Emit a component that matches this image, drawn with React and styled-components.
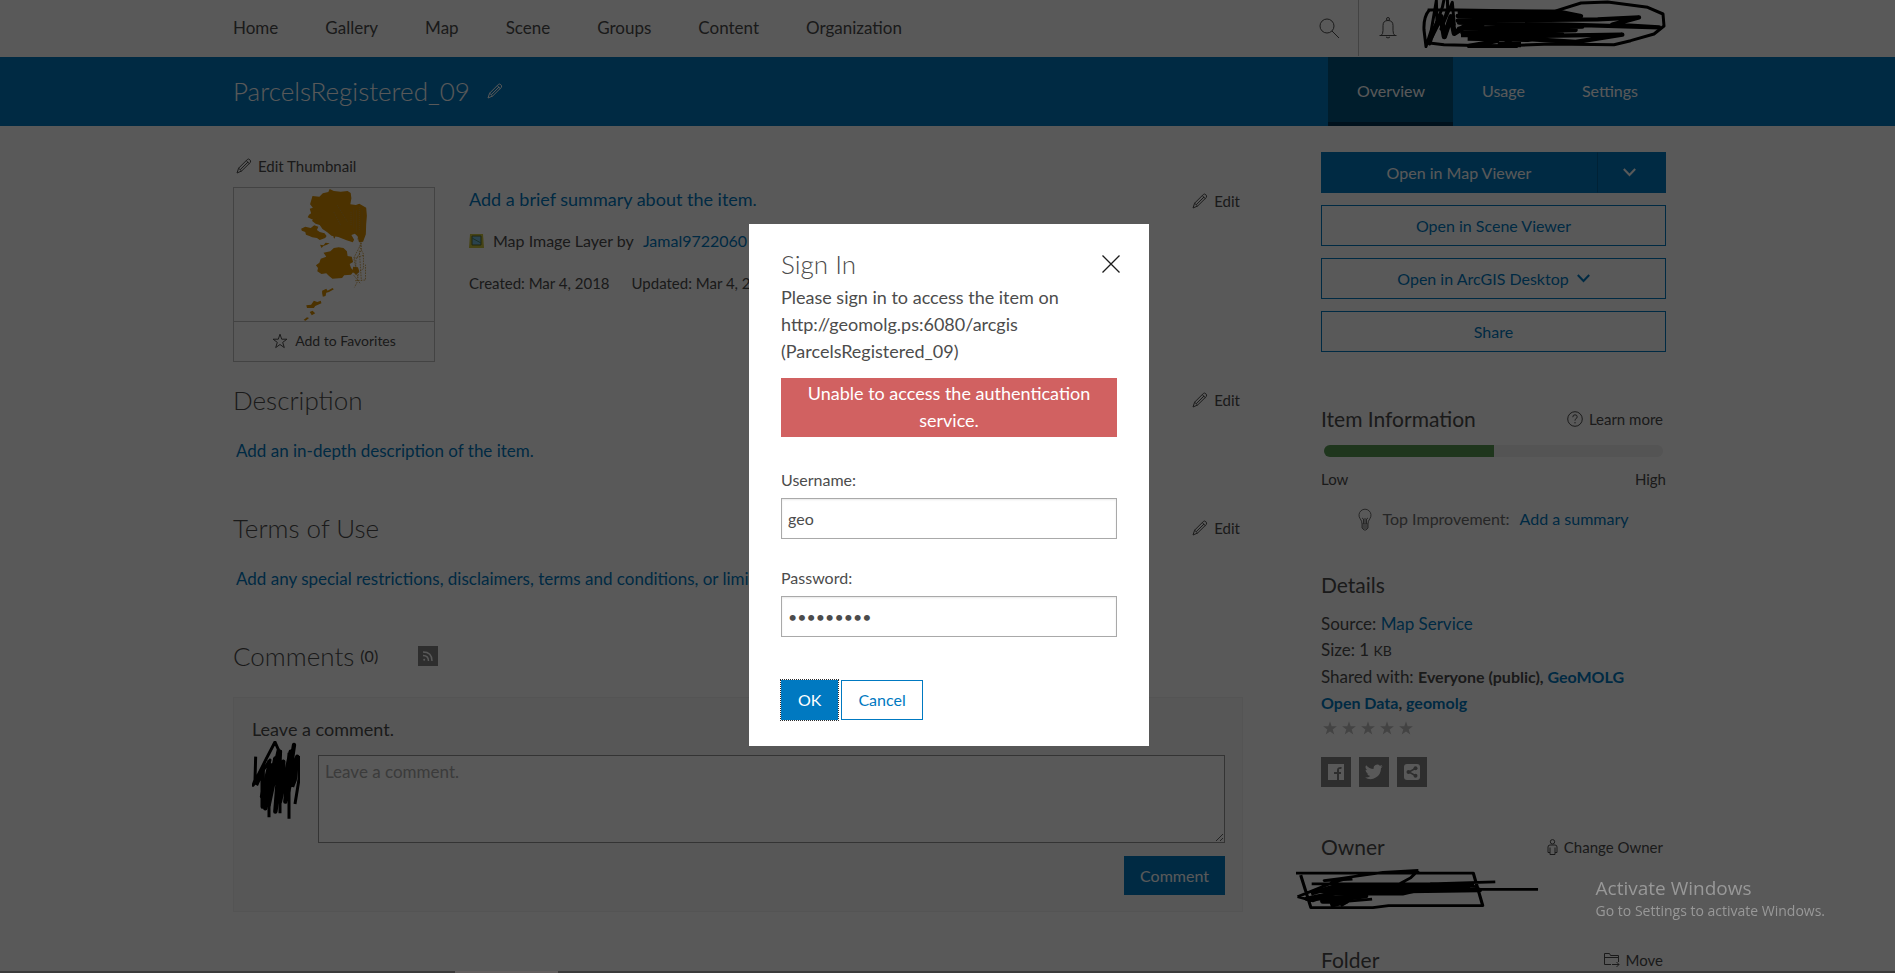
import React from 'react';
import styled, { createGlobalStyle } from 'styled-components';

const colors = {
	text: '#4c4c4c',
	muted: '#6e6e6e',
	blue: '#0079c1',
	line: '#c0c0c0',
	white: '#ffffff',
	error: '#d16161',
	green: '#5a9a55',
};

const GlobalStyle = createGlobalStyle`
	* {
		box-sizing: border-box;
	}

	body {
		margin: 0;
		overflow: hidden;
		font-family: Lato, "Open Sans", sans-serif;
		font-size: 16px;
		line-height: 24px;
		color: ${colors.text};
		background-color: ${colors.white};
	}

	button, input, textarea {
		font: inherit;
	}

	h1, h2, h3, p {
		margin: 0;
		font-weight: 400;
	}

	h1, h2 {
		font-size: 26px;
		font-weight: 300;
	}

	a {
		color: ${colors.blue};
		text-decoration: none;
	}

	svg {
		display: block;
		flex: none;
	}
`;

const Container = styled.div`
	display: flex;
	max-width: 1437px;
	margin: 0 auto;
	padding-left: 4px;
`;

const TopBar = styled(Container)`
	height: 57px;
	justify-content: space-between;
`;

const Nav = styled.nav`
	display: flex;
	align-items: center;
	gap: 47px;
	padding-bottom: 2px;
	font-size: 17px;

	a {
		color: ${colors.text};
	}
`;

const Account = styled.div`
	display: flex;
	align-items: flex-start;
`;

const User = styled.div`
	padding-left: 4px;
`;

const IconButton = styled.button`
	display: flex;
	align-items: center;
	height: ${props => props.$height || 24}px;
	padding: 0 ${props => props.$pad || 0}px;
	border: 0;
	border-right: ${props => (props.$divider ? `1px solid ${colors.line}` : '0')};
	color: inherit;
	background: none;
`;

const Band = styled.div`
	color: ${colors.white};
	background-color: ${colors.blue};
`;

const BandRow = styled(Container)`
	height: 69px;
	justify-content: space-between;
`;

const Title = styled.div`
	display: flex;
	align-items: center;
	gap: 17px;
	padding-bottom: 2px;
`;

const Tabs = styled.nav`
	display: flex;
`;

const Tab = styled.a`
	display: flex;
	align-items: center;
	padding: 2px 28px 0 29px;
	color: ${colors.white};
	background-color: ${props => (props.$active ? '#00537f' : 'transparent')};
	border-bottom: 4px solid ${props => (props.$active ? '#003350' : 'transparent')};
`;

const Page = styled(Container)`
	gap: 78px;
`;

const Main = styled.main`
	flex: 1;
	min-width: 0;
	padding-top: 31px;
`;

const Aside = styled.aside`
	width: 345px;
	padding-top: 26px;
`;

const Action = styled.button`
	display: flex;
	align-items: center;
	gap: 6px;
	padding: 0 3px;
	border: 0;
	font-size: 15px;
	line-height: 18px;
	color: ${colors.text};
	background: none;
`;

const Hero = styled.div`
	display: flex;
	align-items: flex-start;
	gap: 34px;
	padding-top: 12px;
`;

const Thumbnail = styled.div`
	width: 202px;
	border: 1px solid ${colors.line};
`;

const Favorite = styled.button`
	display: flex;
	align-items: center;
	justify-content: center;
	gap: 7px;
	width: 100%;
	height: 40px;
	padding: 0 0 2px;
	border: 0;
	border-top: 1px solid ${colors.line};
	font-size: 14px;
	color: ${colors.text};
	background: none;
`;

const Info = styled.div`
	display: flex;
	flex: 1;
	flex-direction: column;
	gap: 18px;
`;

const Summary = styled.a`
	font-size: 18px;
`;

const Source = styled.div`
	display: flex;
	align-items: center;
	gap: 9px;
`;

const Dates = styled.div`
	display: flex;
	gap: 22px;
	font-size: 15px;
`;

const HeroEdit = styled.div`
	padding-top: 5px;
`;

const Section = styled.section`
	padding: ${props => (props.$first ? 22 : 48)}px 0 0;
`;

const SectionHead = styled.div`
	display: flex;
	align-items: center;
	justify-content: space-between;
	height: 32px;
	margin-bottom: 23px;
`;

const SectionLink = styled.a`
	display: block;
	margin-bottom: 1px;
	padding-left: 3px;
	font-size: 17px;
	white-space: nowrap;
`;

const CommentHead = styled.div`
	display: flex;
	align-items: center;
	height: 32px;
	margin-bottom: 25px;

	span {
		margin: 0 40px 0 6px;
	}
`;

const Feed = styled.a`
	display: flex;
	align-items: center;
	justify-content: center;
	width: 20px;
	height: 20px;
	background-color: #858585;
`;

const CommentPanel = styled.form`
	padding: 19px 17px 16px 18px;
	border: 1px solid #f0f0f0;
	background-color: #fafafa;

	label {
		display: block;
		margin-bottom: 14px;
		font-size: 18px;
	}
`;

const CommentRow = styled.div`
	display: flex;
	gap: 18px;

	svg {
		margin-top: -14px;
		margin-bottom: -4px;
	}
`;

const CommentBox = styled.textarea`
	flex: 1;
	height: 88px;
	padding: 4px 6px;
	border: 1px solid #959595;
	font-size: 17px;
	background-color: ${colors.white};
	resize: vertical;

	&::placeholder {
		color: #a9a9a9;
	}
`;

const CommentFoot = styled.div`
	display: flex;
	justify-content: flex-end;
	padding-top: 13px;
`;

const Button = styled.button`
	display: flex;
	align-items: center;
	justify-content: center;
	gap: 8px;
	height: ${props => props.$height || 41}px;
	padding: 0 ${props => props.$pad || 15}px;
	border: 1px solid ${colors.blue};
	color: ${props => (props.$solid ? colors.white : colors.blue)};
	background-color: ${props => (props.$solid ? colors.blue : colors.white)};

	&:focus-visible {
		outline: 1px dotted #2d2d2d;
	}
`;

const Openers = styled.div`
	display: flex;
	flex-direction: column;
	gap: 12px;
`;

const Split = styled.div`
	display: grid;
	grid-template-columns: 1fr 69px;

	button + button {
		padding-right: 19px;
		border-left-color: #00619b;
	}
`;

const AsideHead = styled.div`
	display: flex;
	align-items: center;
	justify-content: space-between;
	height: 28px;
	margin-top: ${props => props.$top}px;

	h3 {
		font-size: 21px;
	}
`;

const Meter = styled.div`
	height: 12px;
	margin: 12px 3px;
	overflow: hidden;
	border-radius: 6px;
	background-color: #efefef;
`;

const MeterFill = styled.div`
	height: 100%;
	background-color: ${colors.green};
`;

const Scale = styled.div`
	display: flex;
	justify-content: space-between;
	font-size: 15px;
	line-height: 20px;
`;

const Improvement = styled.div`
	display: flex;
	align-items: center;
	justify-content: center;
	gap: 10px;
	margin-top: 18px;
	color: ${colors.muted};
`;

const Facts = styled.div`
	margin-top: 12px;
	font-size: 17px;
	line-height: 26px;

	b {
		font-size: 16px;
	}

	small {
		font-size: 14px;
	}
`;

const Stars = styled.div`
	display: flex;
	align-items: center;
	gap: 3px;
	height: 18px;
	padding-left: 1px;
	margin-top: 3px;
`;

const Socials = styled.div`
	display: flex;
	gap: 8px;
	margin-top: 20px;

	a {
		display: flex;
		align-items: center;
		justify-content: center;
		width: 30px;
		height: 30px;
		background-color: #858585;
	}
`;

const OwnerName = styled.div`
	margin: 8px 0 0 -25px;
`;

const Overlay = styled.div`
	position: fixed;
	inset: 0;
	display: flex;
	align-items: center;
	justify-content: center;
	padding: 0 0 3px 3px;
	background-color: rgba(0, 0, 0, 0.65);
`;

const Dialog = styled.form`
	width: 400px;
	padding: 24px 32px 26px;
	background-color: ${colors.white};
`;

const DialogHead = styled.div`
	display: flex;
	align-items: center;
	justify-content: space-between;
	height: 32px;
	margin: 0 -3px 4px 0;
`;

const Message = styled.p`
	font-size: 18px;
	line-height: 27px;
`;

const Alert = styled.p`
	margin: 13px 0 31px;
	padding: 2px 0 3px;
	font-size: 18px;
	line-height: 27px;
	text-align: center;
	color: ${colors.white};
	background-color: ${colors.error};
`;

const Field = styled.label`
	display: block;
	margin-bottom: 27px;

	input {
		display: block;
		width: 100%;
		height: 41px;
		margin-top: 6px;
		padding: 0 6px;
		border: 1px solid #a9a9a9;
		border-radius: 0;
		color: ${colors.text};
		background-color: ${colors.white};
		box-shadow: inset 0 1px 2px #e8e8e8;
	}
`;

const DialogFoot = styled.div`
	display: flex;
	gap: 3px;
	padding-top: 16px;
`;

const Watermark = styled.div`
	position: fixed;
	right: 70px;
	bottom: 52px;
	font-family: "Open Sans", sans-serif;
	font-size: 14px;
	line-height: 20px;
	color: #989898;

	p:first-child {
		font-size: 19px;
		line-height: 26px;
	}
`;

const Taskbar = styled.div`
	position: fixed;
	right: 0;
	bottom: 0;
	left: 0;
	height: 2px;
	padding-left: 24%;
	background-color: #3b3a3a;

	div {
		width: 103px;
		height: 2px;
		background-color: #625e5e;
	}
`;

function Pencil() {
	return (
		<svg width="16" height="16" viewBox="0 0 16 16" fill="none" stroke="currentColor">
			<path d="M1 15l1.600-4.800L11.400 1.400q1.200-.9 2.400.3t.7 2.600L5.600 13 1 15zM2.600 10.200L5.600 13M10.200 2.600l3.100 3M4.300 11.600L12 4" />
		</svg>
	);
}

function Chevron() {
	return (
		<svg width="13" height="9" viewBox="0 0 13 9" fill="none" stroke="currentColor" strokeWidth="2">
			<path d="M.8 1l5.700 6 5.700-6" />
		</svg>
	);
}

function Star({ filled }) {
	return (
		<svg
			width="16"
			height="16"
			viewBox="0 0 16 16"
			fill={filled ? '#c0c0c0' : 'none'}
			stroke={filled ? 'none' : 'currentColor'}
		>
			<path d="M8 1.200l1.700 5h5.200l-4.200 3.200 1.600 5.200L8 11.500l-4.300 3.100 1.600-5.200L1.100 6.200h5.200z" />
		</svg>
	);
}

function EditAction({ children = 'Edit' }) {
	return (
		<Action type="button">
			<Pencil />
			{children}
		</Action>
	);
}

function ParcelMap() {
	return (
		<svg width="200" height="133" viewBox="40 128 581 399" preserveAspectRatio="none" fill="#d98f00">
			<path d="M268 152l20 2 10-10 16-4 4-9 12 6 20 2 20-2 9 6 2 16-3 18 16 2 10-4 20 12 2 24-2 26-1 30-8 22-12 2-4-18-8-8-10 4 8 14-4 8-18-6-24-10-20-4-12-10-14-10-8-12-12-4-10-8 4-14-4-12 2-14-8-10z" />
			<path d="M260 190l14-4 6 10 12 6 2 14-14 4-14 2-12-6 4-8 6-4zM235 250l12-6 16 4 10-8 12 4-4 10 8 6 14 4 6 8-4 6-16 6-8-6-14-2-8-4-10-4-2-8-10-4zM328 264l8 4-4 12-3-4zM290 298l10 2 6-8 12 2-8 4-10 4-6 6zM300 322l20-4 10-10 14-2 14 2 10 10 2 14 12 2 4 16-10 6 4 12 8 10-8 10-20 2-6 8-28 2-10-8-8-8-14 2-12-8 2-10-6-8 10-8 4-12 16-6zM386 364l14 2 4 12-8 10-12-8zM296 436l12-6 4 6 14-8 4 4-14 8-8 2-2 10-8 2-2-10zM250 480l14-2 8-12 10 4 10-4 2 8-18 8-4 6-20 0zM260 500l8-4 8 8-10 6zM242 524l10-8 6 2-10 8z" />
			<path
				d="M398 280l10 10-2 16 10 20 0 44-14 10-4 30-8 16M410 284l0 30-16 30 0 46M416 330l-30 10M404 316l6 90M392 406l30-2 0-46M388 390l20 26M408 298l-20 40 12 60"
				fill="none"
				stroke="#c08a20"
				strokeWidth="2"
				strokeDasharray="5 3"
			/>
			<path
				d="M388 190v60M396 196v62M404 186v70M412 196v60M380 200v40M340 180l30 50M330 200l20 40"
				fill="none"
				stroke="#b8a070"
				strokeWidth="2"
				strokeDasharray="2 4"
			/>
		</svg>
	);
}

function AccountMark() {
	return (
		<svg width="245" height="48" viewBox="420 0 735 144" fill="none" stroke="#000" strokeWidth="9" strokeLinejoin="round">
			<path d="M445 30q-18 20-16 60l6 50 16-50 15-88 2 60-22 70 38-110 14-65 2 70-20 60 34-80 6 70" />
			<path d="M440 30h90l290 4 80-25 80-3 120 16 46 20 3 36-30 24-70 20-50 12-190-2-160 6-160-4-50-6" />
			<path strokeWidth="13" d="M530 36h310l60 12h-370l340 6-340 8 420-4 124-6-80 22 140 8-280-8-320-6 370 12-370 6 350 4-340 8 300 6-240 6 420-6-140 22-220-14 40 28-140-2 90-16" />
			<path strokeWidth="16" d="M450 110l30-60 10 60 20-60 10 50 30-20h60M540 104h260l-60 14-180-4M650 134h70" />
		</svg>
	);
}

function AvatarMark() {
	return (
		<svg width="48" height="78" viewBox="92 183 144 234" fill="none" stroke="#000" strokeWidth="9" strokeLinejoin="round">
			<path d="M103 230l-2 70-6 16 40-80 26-50 16 36-30 90 24-104 4 90M96 315l50-75-26 110 32-100" />
			<path strokeWidth="13" d="M104 315l20-45 0 110 20-110-12 115 30-150-20 140 34-160-14 180 24-150-10 120 32-150-16 150 26-170-24 165 30-120 4-10-8 70-8 20" />
			<path d="M203 218v198M143 240v172M176 210v190M233 228v70l-12 74" />
		</svg>
	);
}

function OwnerMark() {
	return (
		<svg width="244" height="40" viewBox="38 218 622 118" preserveAspectRatio="none" fill="none" stroke="#000" strokeWidth="8" strokeLinejoin="round">
			<path d="M38 230h452l24 96-240 0-40 6H76L50 236M350 222l-90 6-110 18-40 6 72-4M350 222l-20 22-32 20M78 262h300l168-6M42 300l90-42 30-10M42 300l40 12 48-20 180 0 30-8" />
			<path strokeWidth="13" d="M76 290l60-20 350-6-350 10 340 0-370 8 400-2-360 6-80 20 150-8-110 16 60 0-40 12" />
			<path d="M350 278h305M380 262l120 8M232 307l-60 6-20 14" />
		</svg>
	);
}

export default function App() {
	return (
		<>
			<GlobalStyle />
			<TopBar as="header">
				<Nav>
					{['Home', 'Gallery', 'Map', 'Scene', 'Groups', 'Content', 'Organization'].map(name => (
						<a key={name} href={`#${name.toLowerCase()}`}>{name}</a>
					))}
				</Nav>
				<Account>
					<IconButton type="button" aria-label="Search" $height={56} $pad={18} $divider>
						<svg width="21" height="21" viewBox="0 0 21 21" fill="none" stroke="currentColor">
							<circle cx="8" cy="8" r="7" />
							<path d="M13 13l7 7" />
						</svg>
					</IconButton>
					<IconButton type="button" aria-label="Notifications" $height={56} $pad={20}>
						<svg width="18" height="22" viewBox="0 0 18 22" fill="none" stroke="currentColor">
							<path d="M.5 18.500h17M2 18.500q2-1 2-5V8.500q0-5 5-5t5 5v5q0 4 2 5M7 20q2 2 4 0" />
							<circle cx="9" cy="2" r="1.500" />
						</svg>
					</IconButton>
					<User><AccountMark /></User>
				</Account>
			</TopBar>

			<Band>
				<BandRow>
					<Title>
						<h1>ParcelsRegistered_09</h1>
						<IconButton type="button" aria-label="Edit title"><Pencil /></IconButton>
					</Title>
					<Tabs>
						<Tab href="#overview" $active>Overview</Tab>
						<Tab href="#usage">Usage</Tab>
						<Tab href="#settings">Settings</Tab>
					</Tabs>
				</BandRow>
			</Band>

			<Page>
				<Main>
					<EditAction>Edit Thumbnail</EditAction>
					<Hero>
						<Thumbnail>
							<ParcelMap />
							<Favorite type="button">
								<Star />
								Add to Favorites
							</Favorite>
						</Thumbnail>
						<Info>
							<Summary href="#summary">Add a brief summary about the item.</Summary>
							<Source>
								<svg width="15" height="14" viewBox="0 0 15 14">
									<path d="M1 0h13l1 14H0z" fill="#c9c23c" />
									<path d="M3 2h9v9H3z" fill="#78bfe0" stroke="#5c6c30" />
									<path d="M3 4l9 5" stroke="#4d8a70" />
								</svg>
								<span>Map Image Layer by</span>
								<a href="#owner">Jamal9722060</a>
							</Source>
							<Dates>
								<span>Created: Mar 4, 2018</span>
								<span>Updated: Mar 4, 2018</span>
							</Dates>
						</Info>
						<HeroEdit><EditAction /></HeroEdit>
					</Hero>

					<Section $first>
						<SectionHead>
							<h2>Description</h2>
							<EditAction />
						</SectionHead>
						<SectionLink href="#description">Add an in-depth description of the item.</SectionLink>
					</Section>

					<Section>
						<SectionHead>
							<h2>Terms of Use</h2>
							<EditAction />
						</SectionHead>
						<SectionLink href="#terms">Add any special restrictions, disclaimers, terms and conditions, or limitations</SectionLink>
					</Section>

					<Section>
						<CommentHead>
							<h2>Comments</h2>
							<span>(0)</span>
							<Feed href="#feed" aria-label="Comment feed">
								<svg width="10" height="10" viewBox="0 0 10 10" fill="none" stroke="#fff" strokeWidth="1.400">
									<path d="M0 1q9 0 9 9M0 4.500q5.500 0 5.500 5.500" />
									<circle cx="1.200" cy="8.800" r="1" fill="#fff" stroke="none" />
								</svg>
							</Feed>
						</CommentHead>
						<CommentPanel>
							<label htmlFor="comment">Leave a comment.</label>
							<CommentRow>
								<AvatarMark />
								<CommentBox id="comment" placeholder="Leave a comment." />
							</CommentRow>
							<CommentFoot>
								<Button type="button" $height={39} $solid>Comment</Button>
							</CommentFoot>
						</CommentPanel>
					</Section>
				</Main>

				<Aside>
					<Openers>
						<Split>
							<Button type="button" $solid>Open in Map Viewer</Button>
							<Button type="button" aria-label="More viewers" $solid><Chevron /></Button>
						</Split>
						<Button type="button">Open in Scene Viewer</Button>
						<Button type="button">Open in ArcGIS Desktop <Chevron /></Button>
						<Button type="button">Share</Button>
					</Openers>

					<AsideHead $top={53}>
						<h3>Item Information</h3>
						<Action type="button">
							<svg width="16" height="16" viewBox="0 0 16 16" fill="none" stroke="currentColor">
								<circle cx="8" cy="8" r="7.300" />
								<path d="M5.800 6.200q0-2.400 2.200-2.400t2.200 2q0 1.200-1.200 1.900t-1 1.900M8 11v1.400" />
							</svg>
							Learn more
						</Action>
					</AsideHead>
					<Meter><MeterFill style={{ width: '50%' }} /></Meter>
					<Scale>
						<span>Low</span>
						<span>High</span>
					</Scale>
					<Improvement>
						<svg width="14" height="23" viewBox="0 0 14 23" fill="none" stroke="currentColor">
							<path d="M4 16q0-3-1.800-5.200A6 6 0 1 1 11.800 10.800Q10 13 10 16zM4 16v4l2 2h2l2-2v-4M4 18h6M4 20h6M5.500 16V11l-1.500-1M8.500 16V11l1.500-1M7 10v6" />
						</svg>
						<span>Top Improvement:</span>
						<a href="#summary">Add a summary</a>
					</Improvement>

					<AsideHead $top={40}>
						<h3>Details</h3>
					</AsideHead>
					<Facts>
						<div>Source: <a href="#service">Map Service</a></div>
						<div>Size: 1 <small>KB</small></div>
						<div>
							Shared with: <b>Everyone (public), <a href="#open-data">GeoMOLG Open&nbsp;Data</a>, <a href="#geomolg">geomolg</a></b>
						</div>
					</Facts>
					<Stars>
						{[1, 2, 3, 4, 5].map(n => <Star key={n} filled />)}
					</Stars>
					<Socials>
						<a href="#facebook" aria-label="Facebook">
							<svg width="16" height="16" viewBox="0 0 16 16">
								<path d="M0 0h16v16H0z" fill="#fff" />
								<path d="M10 16V6q0-2.500 3.500-2M6 9h7" fill="none" stroke="#858585" strokeWidth="2" />
							</svg>
						</a>
						<a href="#twitter" aria-label="Twitter">
							<svg width="18" height="16" viewBox="0 0 24 20" fill="#fff">
								<path d="M23.600 2.400a9.700 9.700 0 0 1-2.800.8A4.800 4.800 0 0 0 22.900.500a9.700 9.700 0 0 1-3.100 1.200 4.900 4.900 0 0 0-8.300 4.400A13.800 13.800 0 0 1 1.500 1a4.900 4.900 0 0 0 1.500 6.500 4.900 4.900 0 0 1-2.200-.6 4.900 4.900 0 0 0 3.900 4.800 4.900 4.900 0 0 1-2.200.1 4.900 4.900 0 0 0 4.600 3.400A9.800 9.800 0 0 1 0 17.200a13.800 13.800 0 0 0 21.200-12.300 9.900 9.900 0 0 0 2.400-2.500z" />
							</svg>
						</a>
						<a href="#share" aria-label="Share link">
							<svg width="16" height="16" viewBox="0 0 16 16">
								<rect width="16" height="16" rx="3" fill="#fff" />
								<path d="M12 4L5 8l7 4" fill="none" stroke="#858585" strokeWidth="1.500" />
								<g fill="#858585">
									<circle cx="11.500" cy="4.300" r="2" />
									<circle cx="4.500" cy="8" r="2" />
									<circle cx="11.500" cy="11.700" r="2" />
								</g>
							</svg>
						</a>
					</Socials>

					<AsideHead $top={46}>
						<h3>Owner</h3>
						<Action type="button">
							<svg width="11" height="16" viewBox="0 0 11 16" fill="none" stroke="currentColor">
								<circle cx="5.500" cy="2.800" r="2.200" />
								<path d="M3 13.500H1V8q0-2 2-2h5q2 0 2 2v5.500H8M3 8.500v7h5v-7" />
							</svg>
							Change Owner
						</Action>
					</AsideHead>
					<OwnerName><OwnerMark /></OwnerName>

					<AsideHead $top={37}>
						<h3>Folder</h3>
						<Action type="button">
							<svg width="16" height="14" viewBox="0 0 16 14" fill="none" stroke="currentColor">
								<path d="M7 11.500H.5V.500h5l1 2h8V9M.5 4.500h14M8 11.500h7M12.500 9l2.500 2.500-2.500 2.500" />
							</svg>
							Move
						</Action>
					</AsideHead>
				</Aside>
			</Page>

			<Overlay>
				<Dialog role="dialog" aria-labelledby="sign-in">
					<DialogHead>
						<h2 id="sign-in">Sign In</h2>
						<IconButton type="button" aria-label="Close">
							<svg width="18" height="18" viewBox="0 0 18 18" stroke="#1c1c1c" strokeWidth="1.300">
								<path d="M.5.500l17 17M17.500.500l-17 17" />
							</svg>
						</IconButton>
					</DialogHead>
					<Message>
						Please sign in to access the item on http://geomolg.ps:6080/arcgis (ParcelsRegistered_09)
					</Message>
					<Alert role="alert">Unable to access the authentication service.</Alert>
					<Field>
						Username:
						<input type="text" defaultValue="geo" />
					</Field>
					<Field>
						Password:
						<input type="password" defaultValue="password1" />
					</Field>
					<DialogFoot>
						<Button type="button" $height={40} $pad={16} $solid autoFocus>OK</Button>
						<Button type="button" $height={40} $pad={16}>Cancel</Button>
					</DialogFoot>
				</Dialog>
			</Overlay>

			<Watermark>
				<p>Activate Windows</p>
				<p>Go to Settings to activate Windows.</p>
			</Watermark>
			<Taskbar><div /></Taskbar>
		</>
	);
}
